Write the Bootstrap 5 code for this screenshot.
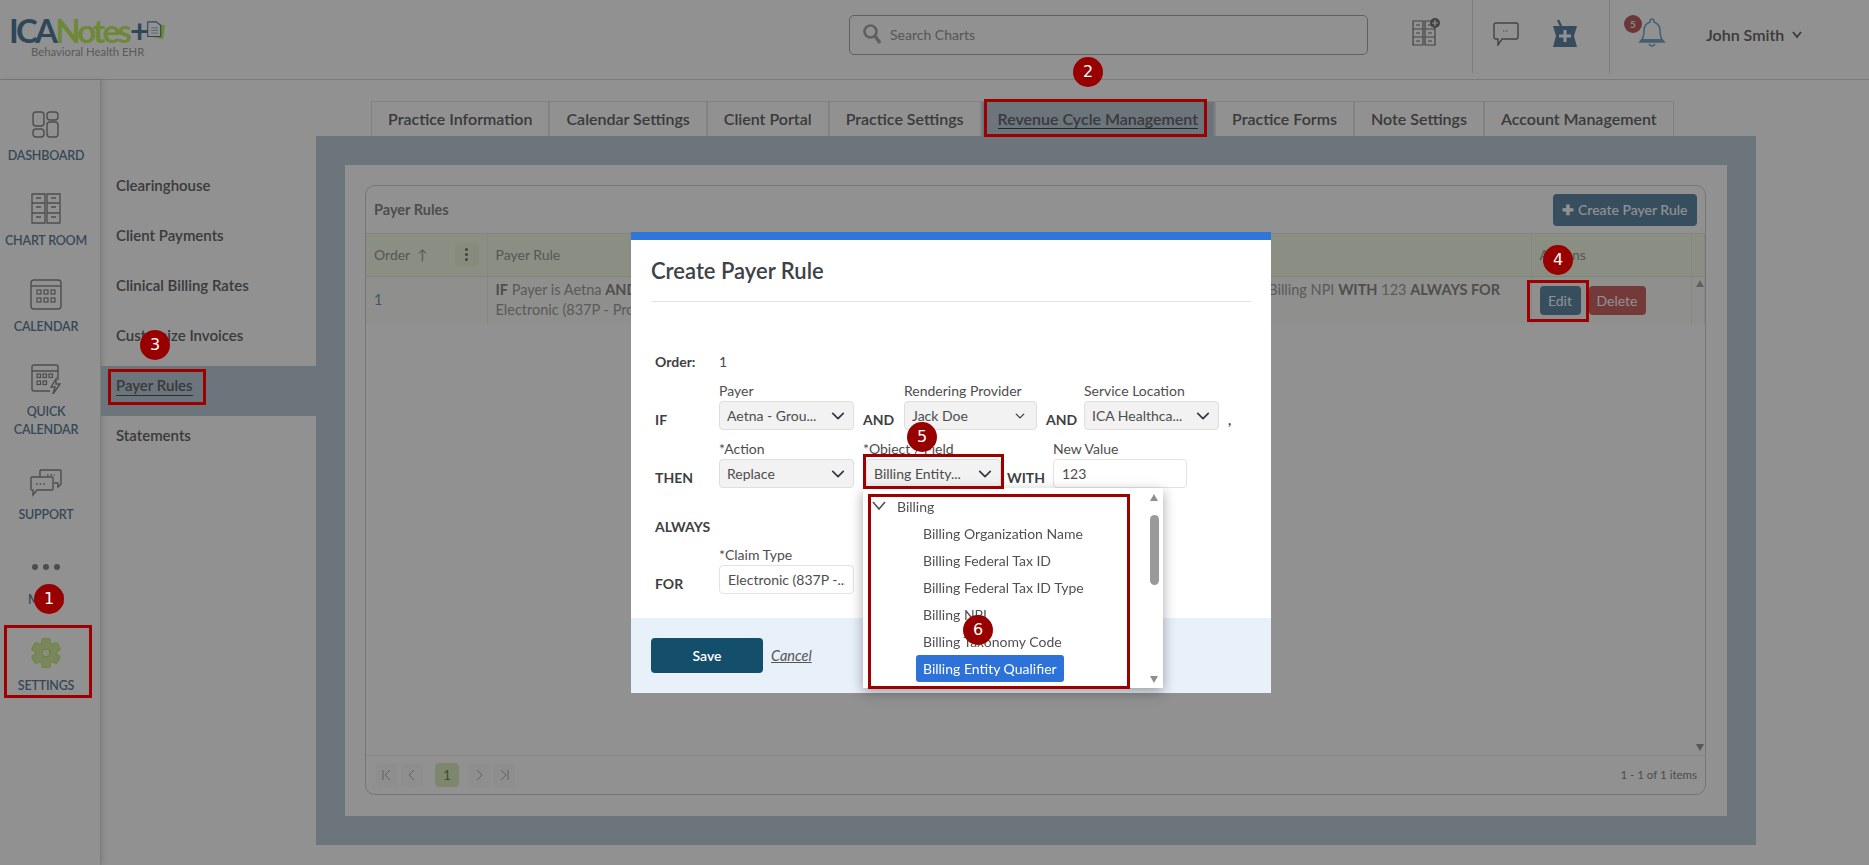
<!DOCTYPE html>
<html lang="en"><head><meta charset="utf-8"><title>Payer Rules</title>
<link href="https://cdn.jsdelivr.net/npm/bootstrap@5.3.0/dist/css/bootstrap.min.css" rel="stylesheet">
<style>
html,body{height:865px;overflow:hidden}
body{font-family:Lato,"Liberation Sans",sans-serif;background:#fff;color:#666;font-size:14px}
.top-bar{height:80px;border-bottom:1px solid #d8d8d8}
.logo-wrap{width:849px;padding:16px 0 0 9px;line-height:1}
.logo-main{font-size:33px;font-weight:700;letter-spacing:-2.8px;color:#527f9e;display:inline-flex;align-items:center;height:28px}
.logo-main b{color:#c0f060;font-weight:700}
.logo-plus{color:#527f9e;margin-left:1px}
.logo-main svg{margin-left:0}
.logo-sub{font-size:11.3px;color:#a0a0a0;padding-left:22px;margin-top:1px}
.search-box{width:519px;height:40px;margin-top:15px;border:1px solid #aaa;border-radius:5px;padding:0 0 2px 12px;font-size:14px;color:#999}
.tool-a{width:105px;height:73px;border-right:1px solid #ddd;padding:17px 0 0 43px}
.tool-b{width:137px;height:73px;border-right:1px solid #ddd;padding:19px 0 0 20px}
.chat-ic{margin-top:3px}
.mort-ic{margin:0 0 0 33px}
.bell-wrap{width:96px;padding:17px 0 0 28px;position:relative}
.bell-badge{position:absolute;left:14px;top:15px;width:18px;height:18px;border-radius:50%;background:#bd6060;color:#eee;font-size:10px;font-weight:700;text-align:center;line-height:18px}
.user-name{font-size:16px;font-weight:600;color:#666;margin-top:23px}
.rail{width:101px;border-right:1px solid #ddd;box-shadow:2px 0 4px rgba(0,0,0,.12);height:785px;padding:31px 8px 0 0;gap:29px}
.rail-item{font-size:12.5px;letter-spacing:-.2px;font-weight:600;color:#5f7f99;line-height:18px;text-align:center;gap:9px;white-space:nowrap}
.rail-lab{line-height:16px}
.rail-two{line-height:18px}
.rail-item svg{display:block}
.subnav{width:215px;padding-top:86px}
.subnav a{display:block;height:50px;line-height:38px;padding-left:15px;font-size:15px;font-weight:600;color:#666;text-decoration:none}
.subnav a.on{background:#bfccda}
.subnav a.on span{border-bottom:1px solid #555;padding-bottom:1px}
.main-col{width:1440px}
.tab-row{margin:21px 0 0 55px;height:35px;gap:0}
.tab-row a{display:block;height:35px;line-height:34px;padding:0 16px;font-size:16px;font-weight:600;color:#666;text-decoration:none;border:1px solid #e4e4e4;border-bottom:0;background:#fff}
.tab-row a.on{background:#bfccda}
.tab-row a.on span{border-bottom:1px solid #444}
.panel-out{height:709px;background:#bfccda;padding:29px}
.panel-in{height:651px;background:#fff;padding:20px 21px 21px 20px}
.rules-card{height:610px;border:1px solid #cfcfcf;border-radius:10px;overflow:hidden;position:relative}
.rules-head{height:48px;padding:0 8px 0 8px;border-bottom:1px solid #e9e9e9}
.rules-title{font-size:14.5px;font-weight:700;color:#888}
.btn-create,.btn-edit{background:#5f89a5;color:#fff;border:0;font-size:14px;border-radius:4px}
.btn-create{width:144px;height:32px;padding:0;font-weight:500}
.btn-edit{width:41px;height:29px;padding:0}
.btn-del{background:#cc6666;color:#fff;border:0;font-size:14px;border-radius:4px;width:57px;height:29px;padding:0;margin-left:8px}
.rules-table{table-layout:fixed;width:100%;margin:0;color:#9a9a9a;--bs-table-bg:transparent;--bs-table-color:#9a9a9a}
.rules-table th,.rules-table td{padding:0 8px;border-right:1px solid #ececec;border-bottom:0;font-size:14px;font-weight:400}
.rules-table thead th{height:42px;background:#f4f9e4;color:#999;border-bottom:1px solid #e5ecd0;vertical-align:middle}
.rules-table tbody td{height:48px;background:#fbfbf8;vertical-align:middle;line-height:20px;color:#a0a0a0;white-space:nowrap;font-size:14.5px}
.rules-table tbody td b{color:#8c8c8c;font-weight:700}
.rules-table .order-num{color:#6f97c0}
.kebab{width:24px;height:24px;background:#ebf4d8;border-radius:5px;gap:2px}
.kebab i{display:block;width:3px;height:3px;border-radius:50%;background:#777}
.scroll-up,.scroll-down{position:absolute;right:1px;width:0;height:0;border-left:4.5px solid transparent;border-right:4.5px solid transparent}
.scroll-up{top:94px;border-bottom:7px solid #aaa}
.scroll-down{top:558px;border-top:7px solid #999}
.rules-foot{height:39px;border-top:1px solid #e9e9e9;padding:0 8px 0 10px}
.pager-btn{width:22px;height:24px;background:#f9f9f9;border-radius:4px;margin-right:3px}
.pager-on{width:24px;height:24px;background:#dbeec0;border-radius:4px;color:#6a8a50;text-align:center;line-height:24px;margin:0 9px 0 9px;font-size:13px}
.pager-txt{font-size:11.5px;color:#888}
.dim-layer{position:fixed;left:0;top:0;width:1869px;height:865px;background:rgba(0,0,0,.43)}
.rule-modal.modal-content{position:absolute;left:631px;top:232px;width:640px;height:461px;border:0;border-radius:0;border-top:8px solid #2e76d9;background:#fff;color:#4a4a4a}
.rule-head{margin:0 20px;height:62px;border-bottom:1px solid #e3e3e3}
.rule-head h5{font-size:22px;font-weight:600;margin:0;color:#3c4248;line-height:62px}
.rule-body{height:316px;padding:0 24px 0 24px;position:relative}
.row-order{padding-top:49px;height:79px;font-size:14px}
.cap{width:64px;font-weight:700;font-size:14px;color:#3f3f3f}
.row-fields{align-items:flex-end}
.row-if{margin-top:0;height:49px}
.row-then{margin-top:9px;height:49px}
.row-always{height:29px;margin-top:24px}
.row-for{height:49px;margin-top:4px}
.row-fields .cap{line-height:20px;padding-bottom:0}
.fld{display:flex;flex-direction:column}
.fld label{font-size:14px;line-height:20px;color:#4d4d4d;height:20px}
.w-135{width:135px}
.w-133{width:133px}
.w-134{width:134px}
.pick.form-select{height:29px;padding:0 24px 0 7px;font-size:14px;background-color:#f2f2f2;border:1px solid #dedede;border-radius:4px;color:#4d4d4d;background-size:18px 14px;background-position:right 6px center}
.pick-sm.form-select{background-size:12px 10px;background-position:right 10px center}
.val.form-control{height:29px;padding:0 8px;font-size:14px;border:1px solid #e3e3e3;border-radius:4px;color:#4d4d4d}
.op{font-weight:700;font-size:14px;color:#3f3f3f;line-height:20px}
.op-a{width:50px;padding-left:9px}
.op-b{width:47px;padding-left:9px}
.op-w{width:52px;padding-left:6px}
.op-c{padding-left:9px;font-weight:700}
.obj-wrap{position:relative;margin-left:12px}
.obj-wrap>label{margin-left:-3px}
.obj-list{position:absolute;left:-3px;top:49px;width:300px;height:200px;background:#fff;box-shadow:0 4px 12px rgba(0,0,0,.35);z-index:5;padding:5px 0 0 0;font-size:14px;color:#505050}
.obj-list .group{height:27px;line-height:27px;padding-left:34px;position:relative}
.obj-list .group svg{position:absolute;left:9px;top:8px}
.obj-list .leaf{height:27px;line-height:27px;padding-left:60px}
.obj-list .leaf.sel{margin-left:53px;padding-left:7px;width:148px;background:#2d72d9;color:#fff;border-radius:3px}
.obj-thumb{position:absolute;left:287px;top:27px;width:9px;height:70px;border-radius:5px;background:#9a9a9a}
.obj-up,.obj-down{position:absolute;left:287px;width:0;height:0;border-left:4.5px solid transparent;border-right:4.5px solid transparent}
.obj-up{top:6px;border-bottom:7px solid #8f8f8f}
.obj-down{top:188px;border-top:7px solid #8f8f8f}
.rule-foot{height:75px;background:#e8f0fa;padding:20px 20px 0}
.btn-save{width:112px;height:35px;background:#134e6b;color:#fff;border:0;border-radius:4px;font-size:14px;font-weight:600;padding:0}
.link-cancel{margin:7px 0 0 8px;font-style:italic;color:#555;font-size:14.5px}
.red-frame{position:absolute;border:3px solid #9c0000;z-index:20;pointer-events:none}
.f1{left:4px;top:625px;width:88px;height:73px}
.f2{left:984px;top:99px;width:223px;height:38px}
.f3{left:108px;top:369px;width:98px;height:36px}
.f4{left:1527px;top:280px;width:62px;height:42px}
.f5{left:863px;top:454px;width:141px;height:35px}
.f6{left:868px;top:494px;width:262px;height:195px}
.pin{position:absolute;width:30px;height:30px;border-radius:50%;background:#980000;color:#fff;font-size:16px;line-height:30px;text-align:center;z-index:21;font-family:"DejaVu Sans",sans-serif}
.p1{left:34px;top:584px}
.p2{left:1073px;top:57px}
.p3{left:140px;top:330px}
.p4{left:1543px;top:245px}
.p5{left:907px;top:422px}
.p6{left:963px;top:615px}
</style></head>
<body>
<header class="top-bar d-flex">
 <div class="logo-wrap">
  <div class="logo-main">ICA<b>Notes</b><span class="logo-plus">+</span>
   <svg width="19" height="21" viewBox="0 0 22 24"><path d="M4 19 20 22 22 6 17 5" fill="#c0f060"/><path d="M2 2H12L17 6V19H2Z" fill="#fff" stroke="#527f9e" stroke-width="1.3"/><path d="M6 9H14M6 12H14M6 15H14" stroke="#8fa9bb"/></svg>
  </div>
  <div class="logo-sub">Behavioral Health EHR</div>
 </div>
 <div class="search-box d-flex align-items-center gap-2">
  <svg width="20" height="22" viewBox="0 0 20 22"><circle cx="8.5" cy="8.5" r="6" fill="none" stroke="#aaa" stroke-width="2.6"/><path d="M13 13 18 20" stroke="#aaa" stroke-width="3.4"/></svg><span>Search Charts</span>
 </div>
 <div class="tool-a">
  <svg width="30" height="30" viewBox="0 0 30 30" fill="none" stroke="#777" stroke-width="1.2"><path d="M2 4H12V28H2ZM14 4H24V28H14ZM2 12H12M2 20H12M14 12H24M14 20H24M5 8H9M5 16H9M5 24H9M17 8H21M17 16H21M17 24H21"/><circle cx="24" cy="6" r="5" fill="#777" stroke="none"/><path d="M24 3V9M21 6H27" stroke="#fff"/></svg>
 </div>
 <div class="tool-b d-flex">
  <svg class="chat-ic" width="26" height="24" viewBox="0 0 26 24"><path d="M3 1H23Q25 1 25 3V15Q25 17 23 17H9L5 23V17H3Q1 17 1 15V3Q1 1 3 1Z" fill="#fff" stroke="#777" stroke-width="1.4"/><path d="M10 9H16" stroke="#888" stroke-dasharray="1.5 1.5"/></svg>
  <svg class="mort-ic" width="26" height="29" viewBox="0 0 26 29"><path d="M6 1 9 7" stroke="#5f87a6" stroke-width="2.4"/><path d="M1 7H25L22 17 25 28H1L4 17Z" fill="#5f87a6"/><path d="M13 11V23M7 17H19" stroke="#fff" stroke-width="3"/></svg>
 </div>
 <div class="bell-wrap">
  <svg width="28" height="31" viewBox="0 0 28 31" fill="none"><path d="M14 2Q16 2 16 5Q22 7 22 14Q22 21 26 25H2Q6 21 6 14Q6 7 12 5Q12 2 14 2Z" fill="#fff" stroke="#7ba6c8" stroke-width="1.5"/><path d="M3 22H25V25H2Z" fill="#7ba6c8"/><path d="M11 27Q14 31 17 27" stroke="#7ba6c8" stroke-width="1.5"/></svg>
  <span class="bell-badge">5</span>
 </div>
 <div class="user-name d-flex align-items-center gap-2 align-self-start"><span>John Smith</span>
  <svg width="10" height="8" viewBox="0 0 10 8"><path d="M1 1 5 6 9 1" fill="none" stroke="#666" stroke-width="1.8"/></svg>
 </div>
</header>
<div class="d-flex">
 <nav class="rail d-flex flex-column align-items-center">
  <div class="rail-item d-flex flex-column align-items-center">
   <svg width="28" height="28" viewBox="0 0 28 28" fill="none" stroke="#888" stroke-width="1.4"><rect x="1" y="1" width="11" height="14" rx="3"/><rect x="15" y="1" width="11" height="8" rx="3"/><rect x="1" y="18" width="11" height="8" rx="3"/><rect x="15" y="11" width="11" height="15" rx="3"/></svg>
   <span class="rail-lab">DASHBOARD</span></div>
  <div class="rail-item d-flex flex-column align-items-center">
   <svg width="30" height="31" viewBox="0 0 30 31" fill="none" stroke="#888" stroke-width="1.3"><path d="M1 1H14V30H1ZM16 1H29V30H16ZM1 10H14M1 20H14M16 10H29M16 20H29M5 5H10M5 14H10M5 24H10M20 5H25M20 14H25M20 24H25"/></svg>
   <span class="rail-lab">CHART ROOM</span></div>
  <div class="rail-item d-flex flex-column align-items-center">
   <svg width="32" height="32" viewBox="0 0 32 32" fill="none" stroke="#888" stroke-width="1.4"><rect x="1" y="2" width="30" height="29" rx="3"/><path d="M1 8H31"/><g stroke-width="1.2"><rect x="7" y="12" width="4" height="4"/><rect x="14" y="12" width="4" height="4"/><rect x="21" y="12" width="4" height="4"/><rect x="7" y="20" width="4" height="4"/><rect x="14" y="20" width="4" height="4"/><rect x="21" y="20" width="4" height="4"/></g></svg>
   <span class="rail-lab">CALENDAR</span></div>
  <div class="rail-item d-flex flex-column align-items-center">
   <svg width="30" height="30" viewBox="0 0 30 30" fill="none" stroke="#888" stroke-width="1.4"><path d="M19 27H3Q1 27 1 25V3Q1 1 3 1H25Q27 1 27 3V16M1 7H27"/><g stroke-width="1.2"><rect x="6" y="10" width="3.5" height="3.5"/><rect x="12" y="10" width="3.5" height="3.5"/><rect x="18" y="10" width="3.5" height="3.5"/><rect x="6" y="17" width="3.5" height="3.5"/><rect x="12" y="17" width="3.5" height="3.5"/></g><path d="M25 15 20 23H24L22 30 29 20H25Z" fill="#fff"/></svg>
   <span class="rail-two">QUICK<br>CALENDAR</span></div>
  <div class="rail-item d-flex flex-column align-items-center">
   <svg width="32" height="30" viewBox="0 0 32 30" fill="none" stroke="#888" stroke-width="1.4"><path d="M10 2H30Q31 2 31 3V16L28 19V15H24"/><path d="M10 2V9"/><path d="M2 9H22Q23 9 23 10V21Q23 22 22 22H7L3 27V22H2Q1 22 1 21V10Q1 9 2 9Z" fill="#fff"/><path d="M6 16H16M17 7H25" stroke-dasharray="1.6 2"/></svg>
   <span class="rail-lab">SUPPORT</span></div>
  <div class="rail-item d-flex flex-column align-items-center">
   <svg width="30" height="31" viewBox="0 0 30 31" fill="#888"><circle cx="4" cy="15" r="3"/><circle cx="15" cy="15" r="3"/><circle cx="26" cy="15" r="3"/></svg>
   <span class="rail-lab">MORE</span></div>
  <div class="rail-item d-flex flex-column align-items-center">
   <svg width="32" height="32" viewBox="0 0 32 32"><defs><g id="gearShape"><circle cx="16" cy="16" r="10"/><rect x="12.25" y="2" width="7.5" height="28" rx="1.5"/><rect x="12.25" y="2" width="7.5" height="28" rx="1.5" transform="rotate(60 16 16)"/><rect x="12.25" y="2" width="7.5" height="28" rx="1.5" transform="rotate(120 16 16)"/></g></defs><use href="#gearShape" fill="#bdf060" stroke="#bdf060" stroke-width="2.2"/><use href="#gearShape" fill="#d8ecaa"/><circle cx="16" cy="16" r="4" fill="#f2f5ea" stroke="#bdf060" stroke-width="1.6"/></svg>
   <span class="rail-lab">SETTINGS</span></div>
 </nav>
 <nav class="subnav">
  <a href="#">Clearinghouse</a><a href="#">Client Payments</a><a href="#">Clinical Billing Rates</a><a href="#">Customize Invoices</a><a href="#" class="on"><span>Payer Rules</span></a><a href="#">Statements</a>
 </nav>
 <main class="main-col">
  <div class="tab-row d-flex">
   <a href="#">Practice Information</a><a href="#">Calendar Settings</a><a href="#">Client Portal</a><a href="#">Practice Settings</a><a href="#" class="on"><span>Revenue Cycle Management</span></a><a href="#">Practice Forms</a><a href="#">Note Settings</a><a href="#">Account Management</a>
  </div>
  <div class="panel-out"><div class="panel-in">
   <section class="rules-card d-flex flex-column">
    <div class="rules-head d-flex align-items-center justify-content-between">
     <span class="rules-title">Payer Rules</span>
     <button class="btn btn-create"><b>&#10010;</b> Create Payer Rule</button>
    </div>
    <table class="table rules-table">
     <colgroup><col style="width:121px"><col style="width:1044px"><col style="width:160px"><col></colgroup>
     <thead><tr>
      <th><div class="d-flex align-items-center justify-content-between"><span>Order &nbsp;&#8593;</span><span class="kebab d-flex flex-column align-items-center justify-content-center"><i></i><i></i><i></i></span></div></th>
      <th>Payer Rule</th><th>Actions</th><th></th></tr></thead>
     <tbody><tr>
      <td class="order-num">1</td>
      <td><b>IF</b> Payer is Aetna <b>AND</b> Rendering Provider is Jack Doe <b>AND</b> Service Location is ICA Healthcare <b>THEN</b> Replace Qualifier in Billing NPI <b>WITH</b> 123 <b>ALWAYS FOR</b><br>Electronic (837P - Professional)</td>
      <td class="p-0"><div class="d-flex ps-2"><button class="btn btn-edit">Edit</button><button class="btn btn-del">Delete</button></div></td>
      <td></td></tr></tbody>
    </table>
    <div class="flex-grow-1"></div>
    <span class="scroll-up"></span><span class="scroll-down"></span>
    <div class="rules-foot d-flex align-items-center">
     <span class="pager-btn d-flex align-items-center justify-content-center"><svg width="12" height="12" viewBox="0 0 12 12" fill="none" stroke="#aaa"><path d="M2 1V11M9 1 4 6 9 11"/></svg></span>
     <span class="pager-btn d-flex align-items-center justify-content-center"><svg width="12" height="12" viewBox="0 0 12 12" fill="none" stroke="#aaa"><path d="M8 1 3 6 8 11"/></svg></span>
     <span class="pager-on">1</span>
     <span class="pager-btn d-flex align-items-center justify-content-center"><svg width="12" height="12" viewBox="0 0 12 12" fill="none" stroke="#aaa"><path d="M4 1 9 6 4 11"/></svg></span>
     <span class="pager-btn d-flex align-items-center justify-content-center"><svg width="12" height="12" viewBox="0 0 12 12" fill="none" stroke="#aaa"><path d="M10 1V11M3 1 8 6 3 11"/></svg></span>
     <span class="pager-txt ms-auto">1 - 1 of 1 items</span>
    </div>
   </section>
  </div></div>
 </main>
</div>

<div class="dim-layer"></div>

<div class="modal-content rule-modal">
 <div class="rule-head"><h5>Create Payer Rule</h5></div>
 <div class="rule-body">
  <div class="row-order d-flex"><span class="cap">Order:</span><span>1</span></div>
  <div class="row-fields row-if d-flex">
   <span class="cap">IF</span>
   <div class="fld w-135"><label>Payer</label><select class="form-select pick"><option>Aetna - Grou...</option></select></div>
   <span class="op op-a">AND</span>
   <div class="fld w-133"><label>Rendering Provider</label><select class="form-select pick pick-sm"><option>Jack Doe</option></select></div>
   <span class="op op-b">AND</span>
   <div class="fld w-135"><label>Service Location</label><select class="form-select pick"><option>ICA Healthca...</option></select></div>
   <span class="op op-c">,</span>
  </div>
  <div class="row-fields row-then d-flex">
   <span class="cap">THEN</span>
   <div class="fld w-135"><label>*Action</label><select class="form-select pick"><option>Replace</option></select></div>
   <div class="fld w-135 obj-wrap"><label>*Object / Field</label><select class="form-select pick"><option>Billing Entity...</option></select>
    <div class="obj-list">
     <div class="group"><svg width="14" height="10" viewBox="0 0 14 10"><path d="M1 1 7 8 13 1" fill="none" stroke="#505050" stroke-width="1.6"/></svg>Billing</div>
     <div class="leaf">Billing Organization Name</div>
     <div class="leaf">Billing Federal Tax ID</div>
     <div class="leaf">Billing Federal Tax ID Type</div>
     <div class="leaf">Billing NPI</div>
     <div class="leaf">Billing Taxonomy Code</div>
     <div class="leaf sel">Billing Entity Qualifier</div>
     <span class="obj-up"></span><span class="obj-thumb"></span><span class="obj-down"></span>
    </div>
   </div>
   <span class="op op-w">WITH</span>
   <div class="fld w-134"><label>New Value</label><input class="form-control val" value="123"></div>
  </div>
  <div class="row-always d-flex align-items-center"><span class="cap">ALWAYS</span></div>
  <div class="row-fields row-for d-flex">
   <span class="cap">FOR</span>
   <div class="fld w-135"><label>*Claim Type</label><input class="form-control val" value="Electronic (837P -..."></div>
  </div>
 </div>
 <div class="rule-foot d-flex align-items-start">
  <button class="btn btn-save">Save</button>
  <a href="#" class="link-cancel">Cancel</a>
 </div>
</div>

<div class="red-frame f1"></div><div class="red-frame f2"></div><div class="red-frame f3"></div><div class="red-frame f4"></div><div class="red-frame f5"></div><div class="red-frame f6"></div>
<div class="pin p1">1</div><div class="pin p2">2</div><div class="pin p3">3</div><div class="pin p4">4</div><div class="pin p5">5</div><div class="pin p6">6</div>
<script src="https://cdn.jsdelivr.net/npm/bootstrap@5.3.0/dist/js/bootstrap.bundle.min.js"></script>
</body></html>
